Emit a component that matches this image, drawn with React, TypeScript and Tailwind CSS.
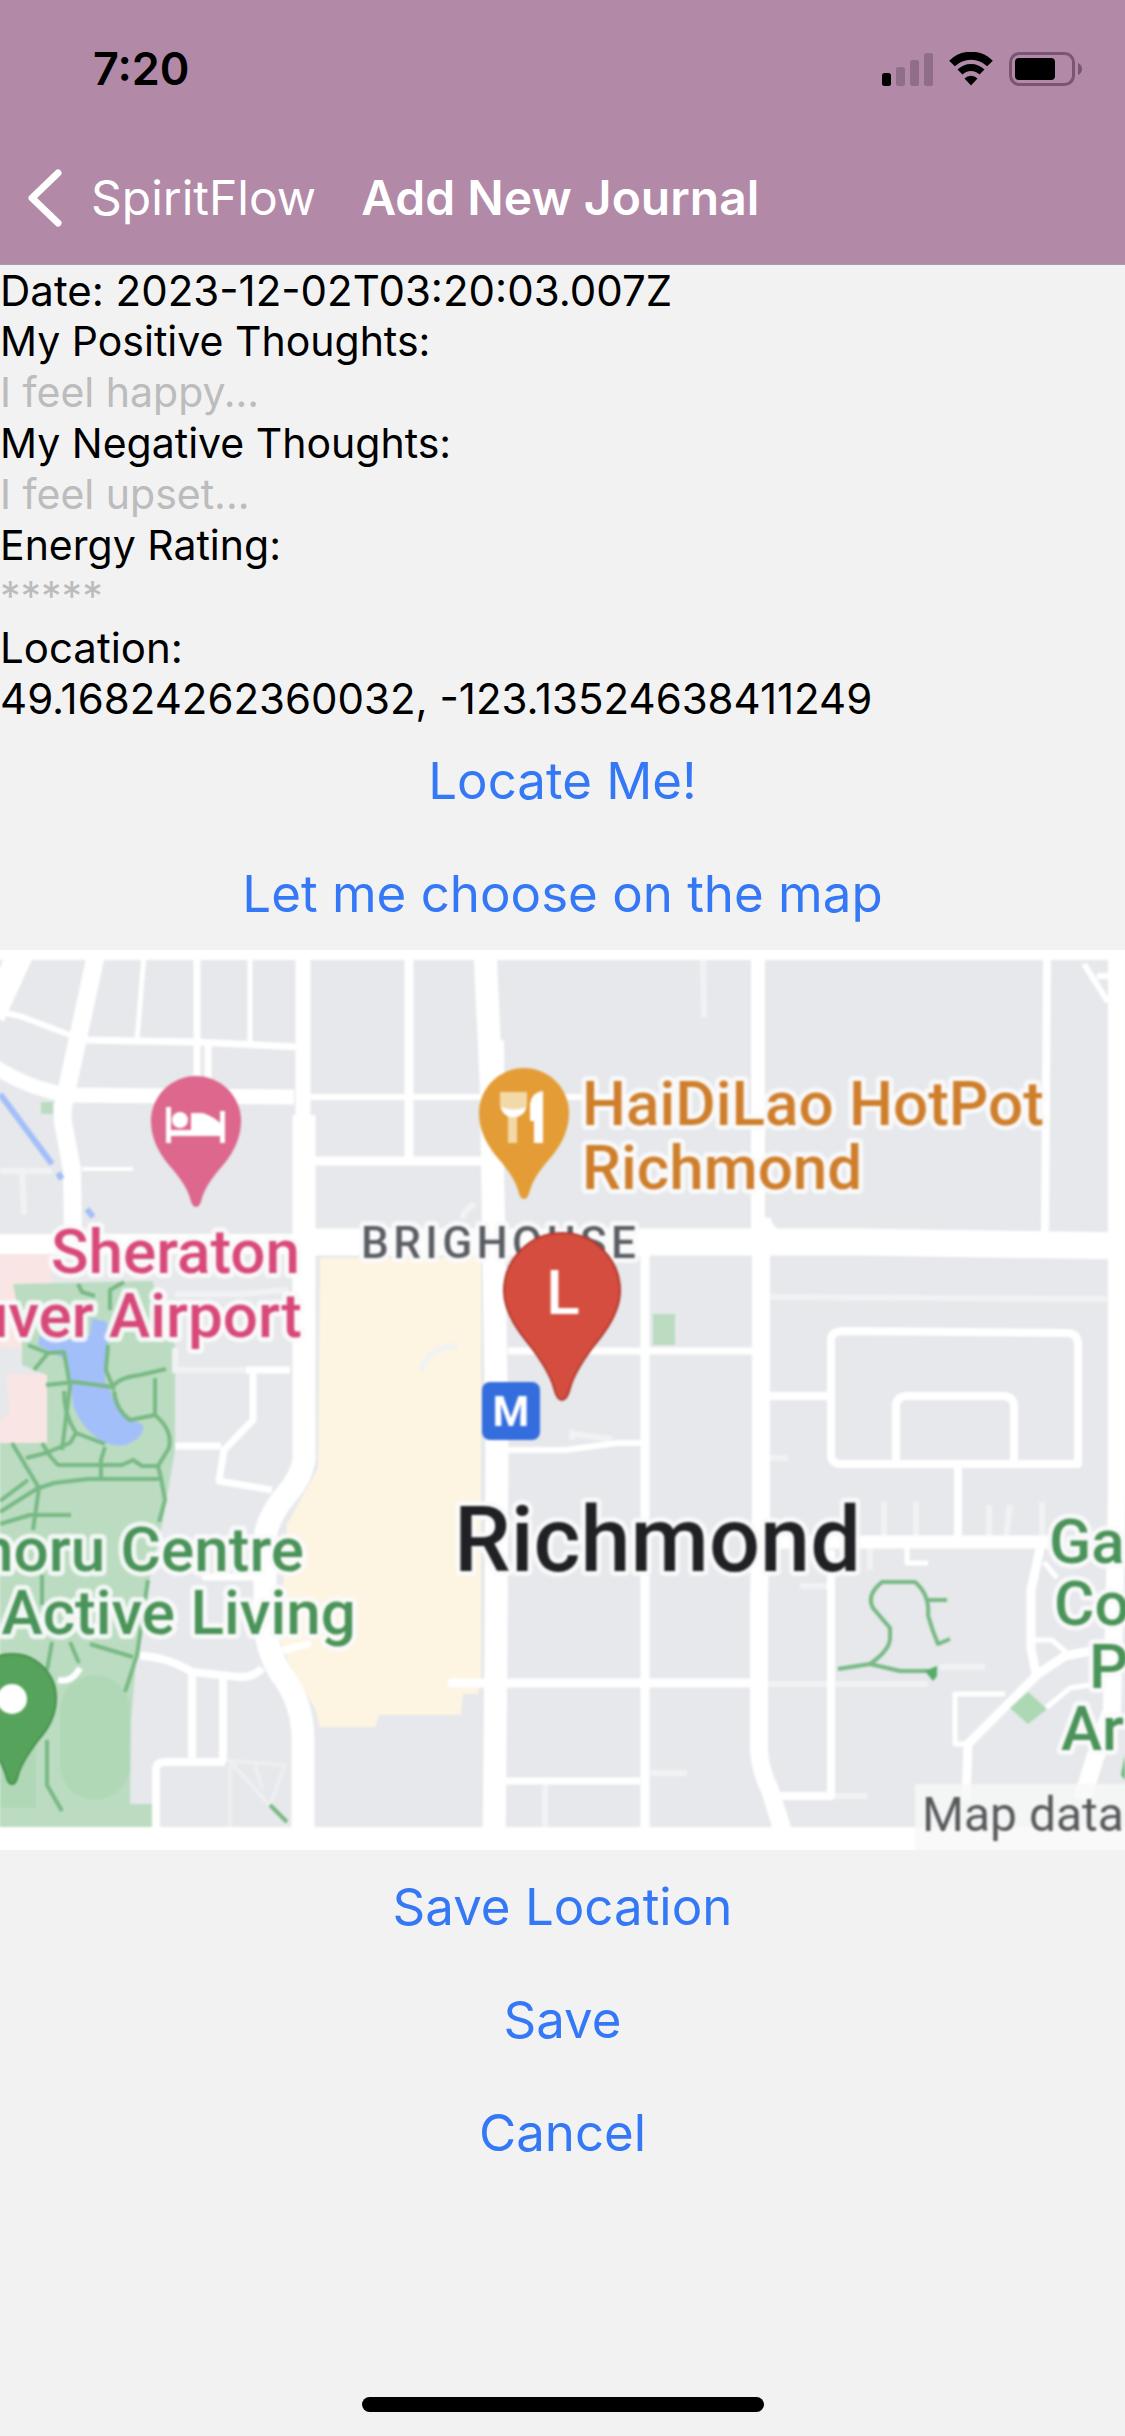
import type { ReactNode } from "react";

function StatusBar() {
  return (
    <div className="flex h-[132px] items-center justify-between pl-[93px] pr-[42px] pt-1.5">
      <time className="text-[45px] leading-[54px] font-semibold text-black">7:20</time>
      <div className="flex items-center gap-[15px]">
        <svg width="51" height="33" viewBox="0 0 51 33" aria-label="Signal">
          <rect x="0" y="20" width="9" height="13" rx="2.5" fill="#000" />
          <rect x="14" y="14" width="9" height="19" rx="2.5" fill="#8f6e88" />
          <rect x="28" y="7" width="9" height="26" rx="2.5" fill="#8f6e88" />
          <rect x="42" y="0" width="9" height="33" rx="2.5" fill="#8f6e88" />
        </svg>
        <svg width="46" height="34" viewBox="0 0 46 34" aria-label="Wi-Fi">
          <path d="M4 11.5 A27 27 0 0 1 42 11.5" fill="none" stroke="#000" strokeWidth="8" />
          <path d="M12 20 A15.5 15.5 0 0 1 34 20" fill="none" stroke="#000" strokeWidth="7" />
          <path d="M23 33.500 L16.500 26.500 A9 9 0 0 1 29.500 26.500 Z" fill="#000" />
        </svg>
        <svg width="74" height="34" viewBox="0 0 74 34" aria-label="Battery">
          <rect x="1.500" y="1.500" width="63" height="31" rx="9" fill="none" stroke="#7a5674" strokeWidth="3" />
          <rect x="6" y="6" width="40" height="22" rx="4" fill="#000" />
          <path d="M69 11 Q73 13 73 17 Q73 21 69 23 Z" fill="#7a5674" />
        </svg>
      </div>
    </div>
  );
}

function NavBar() {
  return (
    <nav className="flex h-[132px] items-center gap-[45px] pl-[27px] text-[48px] leading-[60px] text-white">
      <button type="button" className="flex items-center gap-7">
        <svg width="36" height="58" viewBox="0 0 36 58" aria-hidden="true">
          <path d="M31 4 L5 29 L31 54" fill="none" stroke="#fff" strokeWidth="7" strokeLinecap="round" strokeLinejoin="round" />
        </svg>
        SpiritFlow
      </button>
      <h1 className="font-semibold">Add New Journal</h1>
    </nav>
  );
}

function Field({ id, label, placeholder }: { id: string; label: string; placeholder: string }) {
  return (
    <div className="text-[41px]">
      <label htmlFor={id} className="block leading-[51px]">{label}</label>
      <input
        id={id}
        type="text"
        placeholder={placeholder}
        className="block h-[51px] w-full bg-transparent outline-none placeholder:text-[#bcbcbc]"
      />
    </div>
  );
}

function Action({ children }: { children: ReactNode }) {
  return (
    <button type="button" className="block h-[113px] w-full text-center text-[51px] leading-[64px] text-[#3478f6]">
      {children}
    </button>
  );
}

function MapView() {
  return (
    <svg
      viewBox="0 0 1125 900"
      className="block w-full bg-white"
      role="img"
      aria-label="Map of Richmond"
      fontFamily="Roboto, sans-serif"
    >
      <g className="blur-[1px]">
        <rect x="-10" y="10" width="1145" height="867" fill="#e6e8eb" />

        {/* land areas */}
        <path d="M0 304 H50 L52 334 H14 L22 380 V398 H0 Z M6 424 H47 V493 H0 V470 L10 462 Z" fill="#f9e6e4" />
        <path d="M13 334 L153 331 L160 380 L175 395 V500 L163 570 L147 640 L137 700 L131 770 L130 854 H152 V877 H0 V493 H47 V425 L22 415 V380 Z" fill="#bbdcc1" />
        <rect x="60" y="725" width="70" height="125" rx="35" fill="#b0d8b7" />
        <path d="M0 790 H36 V858 H0 Z" fill="#b0d8b7" />
        <path d="M92 368 L107 372 L108 395 L105 430 L112 445 Q118 462 130 468 L143 475 Q145 488 125 495 Q105 498 88 480 Q72 462 72 445 L66 410 L38 395 L40 385 L75 390 L90 385 Z" fill="#a3bffa" />
        <path d="M320 308 H481 V728 L478 744 H463 L461 765 H379 L375 777 H320 L315 758 L293 724 L280 690 L287 574 L318 518 Z" fill="#fdf5e2" />
        <path d="M653 364 h22 v31 h-22 Z" fill="#bbdcc1" />
        <path d="M41 152 h12 v12 h-12 Z" fill="#bbdcc1" />

        {/* faint lanes */}
        <g fill="none" stroke="#f1f2f3" strokeWidth="6">
          <path d="M0 221 H52 M22 221 L24 265 M703 10 L704 68 M770 347 L1107 349" />
          <path d="M884 552 V588 M916 552 V588 M989 555 V588 M1010 555 L1006 588 M1042 552 V588 M870 592 V620" />
          <path d="M765 734 H928 M545 831 V877 M650 823 H687 M800 636 H828 M770 508 H788 M940 717 H985 M835 846 H867" />
          <path d="M572 480 V490 M572 484 L612 489 M421 421 Q428 396 458 396 M462 269 Q464 260 475 254" />
          <path d="M175 344 H240 L288 340 M175 398 V420 H288" />
          <path d="M230 811 L270 856 L285 815 Z M230 815 V877 M255 815 L262 838" strokeWidth="4" stroke="#edeff1" />
        </g>

        {/* streets */}
        <g fill="none" stroke="#fff" strokeLinejoin="round">
          <path d="M22 0 L-8 66" strokeWidth="26" />
          <path d="M0 62 L20 66 L70 85" strokeWidth="6" />
          <path d="M97 0 L68 134 Q60 160 64 178 L72 220 L73 290" strokeWidth="18" />
          <path d="M-5 117 Q28 138 67 145 L294 147" strokeWidth="15" />
          <path d="M300 147 H640" strokeWidth="6" />
          <path d="M84 90 L195 92 L300 97" strokeWidth="7" />
          <path d="M144 5 L137 91 M250 5 V95" strokeWidth="5" />
          <path d="M197 5 V140 M208 95 V140" strokeWidth="7" />
          <path d="M82 219 H133" strokeWidth="4" />
          <path d="M303 0 V180" strokeWidth="15" />
          <path d="M304 165 V510 Q301 528 286 545 Q265 570 265 592 L265 670 Q266 700 281 724 Q303 752 303 790 V900" strokeWidth="23" />
          <path d="M310 211 H488" strokeWidth="9" />
          <path d="M409 5 V211" strokeWidth="9" />
          <path d="M-5 294 H320" strokeWidth="20" />
          <path d="M300 292 H860 L1125 296" strokeWidth="27" />
          <path d="M485 0 L491 130 L494 300 L497 500 L496 700 L494 900" strokeWidth="23" />
          <path d="M501 90 L502 200" strokeWidth="6" />
          <path d="M645 292 V880" strokeWidth="9" />
          <path d="M508 401 H760" strokeWidth="7" />
          <path d="M508 500 H565 L617 493 H642" strokeWidth="6" />
          <path d="M452 733 H755" strokeWidth="9" strokeLinecap="round" />
          <path d="M505 831 H640" strokeWidth="7" />
          <path d="M758 0 V290" strokeWidth="14" />
          <path d="M761 290 V560 L759 650 V800 Q760 820 770 840 L784 885" strokeWidth="18" />
          <path d="M764 268 L770 268 Q773 280 787 284 V290 H764 Z" fill="#fff" />
          <path d="M1047 10 L1045 290" strokeWidth="8" />
          <path d="M1084 14 L1108 52 M1097 26 H1110" strokeWidth="6" />
          <path d="M1117 0 V540 L1112 760 Q1100 790 1082 850" strokeWidth="18" />
          <path d="M831 390 Q831 382 842 381 L1068 383 Q1078 384 1078 394 V514 H840 Q831 513 831 505 Z" strokeWidth="8" />
          <path d="M896 512 V455 Q897 446 908 446 H1004 Q1014 447 1014 457 V512" strokeWidth="8" />
          <path d="M770 446 H831 M958 516 V590" strokeWidth="8" />
          <path d="M770 592 H1048" strokeWidth="13" />
          <path d="M831 600 V846 H778" strokeWidth="8" />
          <path d="M907 598 V613 H928 M1044 612 L1057 628" strokeWidth="5" />
          <path d="M1041 594 L1031 640 V698 L1036 724" strokeWidth="9" />
          <path d="M1090 701 L1065 706 L1038 724 L968 794 L966 850" strokeWidth="9" />
          <path d="M1034 690 H1052 L1068 704 M1090 735 L1070 738 L1046 758 M1005 744 H955 V794 H968" strokeWidth="5" />
          <path d="M175 496 H221 M253 420 V470 L224 500 L219 531 L272 540 M246 420 H290" strokeWidth="7" />
          <path d="M140 706 Q165 706 192 722 L240 727 Q255 727 262 718 M192 722 V812 M223 727 V812 M156 880 V818 Q157 812 165 812 H225" strokeWidth="8" />
          <path d="M205 627 H262 M284 700 L308 694" strokeWidth="7" strokeLinecap="round" />
          <path d="M58 730 Q72 733 80 718" strokeWidth="6" />
        </g>

        {/* waterway and footpaths */}
        <path d="M0 144 L52 214 M58 223 L62 229 M87 259 L93 267" stroke="#a3bffa" strokeWidth="6" fill="none" />
        <g fill="none" stroke="#78b984" strokeWidth="4" strokeLinejoin="round">
          <path d="M78 334 L82 342 L95 346 M124 332 L110 340 V360 M28 395 L48 403 L64 402 L70 436 L62 500 M48 403 L34 420 M46 435 L75 432 L112 437 Q120 427 140 425 L166 419 M108 395 L106 420 L114 440 M155 428 V465" />
          <path d="M64 441 Q64 465 76 483 L70 493 L46 503 L26 508 M76 483 L105 494 M114 441 Q116 460 130 470 L155 465 Q173 480 169 498 L158 516 L161 528 L165 550 L159 572 M42 493 L50 506 L58 515 H122 L133 510 L142 516 H158 M105 497 L101 510 V528" />
          <path d="M12 493 L39 538 L54 533 L88 529 H160 M0 551 L28 530 M0 562 L38 538 M0 574 L30 565 H71 M39 538 L33 580 M42 625 V655" />
          <path d="M148 630 L137 705 L125 742 M90 694 L133 707 M70 692 L79 713 M52 692 L47 720 M47 790 V835 L62 861 M270 855 L287 872" />
          <path d="M838 719 L870 714 Q890 700 890 688 V678 L873 658 Q866 645 882 632 H915 Q930 645 928 665 Q932 680 938 694 L950 689 M928 650 H947 M870 714 L900 721 H935" />
        </g>
        <path d="M925 721 L937 716 V726 L933 731 Z" fill="#56ad68" />
        <path d="M1010 758 L1028 742 L1047 759 L1028 774 Z" fill="#acd8b4" />
        <path d="M1125 805 V830 L1121 825 Z" fill="#6db57a" />

        {/* place names */}
        <g stroke="#fafafb" strokeWidth="10" strokeOpacity="0.85" strokeLinejoin="round" paintOrder="stroke" fontWeight="500">
          <g fontSize="62">
            <g fill="#cf7f2c">
              <text x="582" y="175">HaiDiLao HotPot</text>
              <text x="582" y="239">Richmond</text>
            </g>
            <g fill="#d8497a" textAnchor="end">
              <text x="300" y="323">Sheraton</text>
              <text x="302" y="387">uver Airport</text>
            </g>
            <g fill="#4a9359">
              <g textAnchor="end">
                <text x="304" y="621">noru Centre</text>
                <text x="356" y="684">Active Living</text>
              </g>
              <text x="1049" y="613">Ga</text>
              <text x="1054" y="675">Co</text>
              <text x="1089" y="738">P</text>
              <text x="1061" y="800">Ar</text>
            </g>
          </g>
          <text x="361" y="308" fontSize="44" className="tracking-widest" fill="#5a5e63">BRIGHOUSE</text>
          <text x="454" y="621" fontSize="90" fill="#202124">Richmond</text>
        </g>

        <rect x="915" y="834" width="220" height="76" fill="#f7f7f8" fillOpacity="0.8" />
        <text x="922" y="881" fontSize="48" fill="#58595b">Map data</text>

        {/* hotel pin */}
        <path d="M196 257 Q192 257 190 248 Q186 234 168 214 Q151 193 151 171 A45 45 0 0 1 241 171 Q241 193 224 214 Q206 234 202 248 Q200 257 196 257 Z" fill="#dd678d" />
        <path d="M166 157 h5 v23 h49 v-19 h5 v32 h-5 v-7 h-49 v7 h-5 Z" fill="#fff" />
        <circle cx="180" cy="170" r="8" fill="#fff" />
        <path d="M191 180 V163 H203 Q214 167 220 173 V180 Z" fill="#fff" />

        {/* restaurant pin */}
        <path d="M524 249 Q520 249 518 240 Q514 226 496 206 Q479 185 479 163 A45 45 0 0 1 569 163 Q569 185 552 206 Q534 226 530 240 Q528 249 524 249 Z" fill="#e49d36" />
        <path d="M500 142 H527 V154 Q527 163 517 165 V193 H508 V165 Q500 162 500 154 Z" fill="#f3d9a8" />
        <path d="M501 157 Q514 162 526 157 Q526 164 517 167 H509 Q502 164 501 157 Z" fill="#fff" />
        <path d="M543 141 V193 H534 V171 H530 V154 Q532 142 543 141 Z" fill="#fff" />

        {/* park pin */}
        <path d="M12 834 Q8 834 6 825 Q2 811 -15 789 Q-32 770 -32 748 A44 44 0 0 1 56 748 Q56 770 39 789 Q22 811 18 825 Q16 834 12 834 Z" fill="#56a45b" stroke="#468f4d" strokeWidth="2" />
        <circle cx="12" cy="749" r="15" fill="#fff" />

        {/* station */}
        <rect x="482" y="432" width="58" height="58" rx="8" fill="#346dde" />
        <text x="511" y="476" fontSize="42" fontWeight="700" fill="#fff" textAnchor="middle">M</text>

        {/* selected location */}
        <path d="M562 450 Q557 450 554 438 Q549 420 528 393 Q504 364 504 341 A58 58 0 0 1 620 341 Q620 364 596 393 Q575 420 570 438 Q567 450 562 450 Z" fill="#d54d3e" stroke="#b23a2f" strokeWidth="2" />
        <text x="563" y="364" fontSize="62" fontWeight="500" fill="#fff" textAnchor="middle">L</text>
      </g>
    </svg>
  );
}

export default function App() {
  return (
    <div className="flex min-h-screen flex-col overflow-x-hidden bg-[#f2f2f2] font-['Inter',sans-serif] text-black">
      <header className="border-b border-[#a99aa6] bg-[#b28aa7]">
        <StatusBar />
        <NavBar />
      </header>
      <main>
        <form onSubmit={(event) => event.preventDefault()}>
          <div className="text-[42px] leading-[51px]">
            <p>Date: 2023-12-02T03:20:03.007Z</p>
            <Field id="positive" label="My Positive Thoughts:" placeholder="I feel happy..." />
            <Field id="negative" label="My Negative Thoughts:" placeholder="I feel upset..." />
            <Field id="energy" label="Energy Rating:" placeholder="*****" />
            <p>Location:</p>
            <p>49.16824262360032, -123.13524638411249</p>
          </div>
          <Action>Locate Me!</Action>
          <Action>Let me choose on the map</Action>
          <MapView />
          <Action>Save Location</Action>
          <Action>Save</Action>
          <Action>Cancel</Action>
        </form>
      </main>
      <div className="mx-auto mt-auto mb-6 h-[15px] w-[402px] rounded-full bg-black" />
    </div>
  );
}
